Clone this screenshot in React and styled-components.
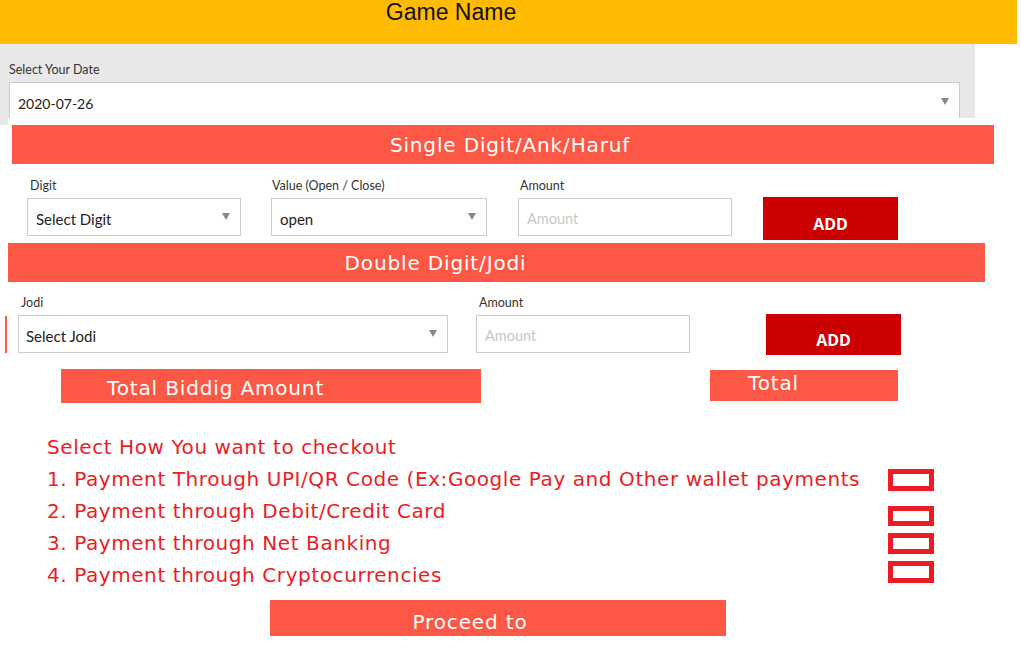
import React from 'react'
import styled, { createGlobalStyle } from 'styled-components'

const Global = createGlobalStyle`
body {
    margin: 0;
    background: #fff;
    font-family: 'Lato', 'Liberation Sans', sans-serif;
}
`

const Page = styled.div`
width: 1021px;
height: 655px;
overflow: hidden;
`

const Header = styled.header`
height: 44px;
width: 1017px;
background: #ffbb00;
padding-right: 115px;
box-sizing: border-box;
text-align: center;
font-family: 'Liberation Sans', Arial, sans-serif;
font-size: 23px;
line-height: 24px;
color: #111;
`

const DateSection = styled.section`
width: 975px;
height: 81px;
box-sizing: border-box;
background: #e8e8e8;
padding: 18px 15px 0 9px;
`

const Label = styled.div`
font-size: 12.5px;
line-height: 15px;
color: #333;
padding-left: ${props => props.inset || 0}px;
margin-bottom: 5px;
`

const Select = styled.div`
height: ${props => props.h || 38}px;
box-sizing: border-box;
background: #fff;
border: 1px solid #ccc;
display: flex;
align-items: center;
justify-content: space-between;
padding: 3px 10px 0 ${props => props.pl || 8}px;
font-size: ${props => props.fs || 15}px;
color: #222;
`

const Caret = styled.span`
width: 0;
height: 0;
border-left: 4px solid transparent;
border-right: 4px solid transparent;
border-top: 7px solid #888;
margin-top: -5px;
`

const Input = styled(Select)`
color: #c8c8c8;
font-size: 14.5px;
`

const SinglePanel = styled.section`
margin: -7px 0 0 8px;
width: 992px;
height: 125px;
box-sizing: border-box;
background: #fff;
padding: 7px 6px 0 4px;
`

const Bar = styled.div`
height: 39px;
width: ${props => props.w}px;
box-sizing: border-box;
background: #fd5845;
color: #fff;
display: flex;
align-items: center;
justify-content: center;
padding-left: ${props => props.lead || 0}px;
padding-right: ${props => props.shift || 0}px;
font-family: 'DejaVu Sans', 'Liberation Sans', sans-serif;
font-size: 20px;
letter-spacing: 0.85px;
`

const FormRow = styled.div`
display: flex;
align-items: flex-start;
padding: ${props => props.top}px 0 0 ${props => props.left}px;
`

const Field = styled.div`
width: ${props => props.w}px;
margin-right: ${props => props.gap}px;
`

const AddButton = styled.button`
width: 135px;
height: ${props => props.h}px;
margin-top: ${props => props.top}px;
border: none;
background: #cc0000;
color: #fff;
font-family: 'Open Sans', 'Liberation Sans', sans-serif;
font-weight: 700;
font-size: 16px;
padding: ${props => props.pt}px 0 0;
display: flex;
justify-content: center;
align-items: center;
`

const DoubleBar = styled(Bar)`
margin-left: 8px;
`

const Stub = styled.div`
width: 2px;
height: 37px;
margin-top: 21px;
margin-right: 11px;
background: #fd5845;
`

const TotalsRow = styled.div`
display: flex;
align-items: flex-start;
margin-top: 14px;
padding-left: 61px;
`

const TotalBar = styled.div`
width: ${props => props.w}px;
height: ${props => props.h}px;
margin-top: ${props => props.top || 0}px;
margin-right: ${props => props.gap || 0}px;
box-sizing: border-box;
background: #fd5845;
color: #fff;
font-family: 'DejaVu Sans', 'Liberation Sans', sans-serif;
font-size: 20px;
letter-spacing: 0.85px;
line-height: 24px;
padding: ${props => props.pt}px 0 0 ${props => props.pl}px;
`

const Checkout = styled.section`
margin-top: 28px;
padding-left: 47px;
color: #ed1c24;
font-family: 'DejaVu Sans', 'Liberation Sans', sans-serif;
font-size: 20px;
letter-spacing: 0.58px;
line-height: 32px;
`

const Option = styled.div`
display: grid;
grid-template-columns: 841px 46px;
align-items: start;
white-space: nowrap;
`

const Check = styled.span`
display: block;
width: 46px;
height: ${props => props.h}px;
box-sizing: border-box;
border: 5px solid #ed1c24;
margin-top: ${props => props.top}px;
`

const Proceed = styled.button`
display: block;
width: 456px;
height: 36px;
margin: 9px 0 0 270px;
border: none;
background: #fd5845;
color: #fff;
font-family: 'DejaVu Sans', 'Liberation Sans', sans-serif;
font-size: 20px;
letter-spacing: 0.85px;
padding: 8px 56px 0 0;
`

const options = [
    { text: '1. Payment Through UPI/QR Code (Ex:Google Pay and Other wallet payments', h: 22, top: 6 },
    { text: '2. Payment through Debit/Credit Card', h: 20, top: 11 },
    { text: '3. Payment through Net Banking', h: 21, top: 6 },
    { text: '4. Payment through Cryptocurrencies', h: 22, top: 2 },
]

const App = () => {
    return (
        <Page>
            <Global />
            <Header>Game Name</Header>

            <DateSection>
                <Label>Select Your Date</Label>
                <Select h={40} pl={8} fs={14}>
                    2020-07-26
                    <Caret />
                </Select>
            </DateSection>

            <SinglePanel>
                <Bar w={982} lead={14}>Single Digit/Ank/Haruf</Bar>
                <FormRow top={14} left={15}>
                    <Field w={214} gap={30}>
                        <Label inset={3}>Digit</Label>
                        <Select>Select Digit<Caret /></Select>
                    </Field>
                    <Field w={216} gap={31}>
                        <Label inset={1}>Value (Open / Close)</Label>
                        <Select>open<Caret /></Select>
                    </Field>
                    <Field w={214} gap={31}>
                        <Label inset={2}>Amount</Label>
                        <Input>Amount</Input>
                    </Field>
                    <AddButton h={43} top={19} pt={10}>ADD</AddButton>
                </FormRow>
            </SinglePanel>

            <DoubleBar w={977} shift={122}>Double Digit/Jodi</DoubleBar>

            <FormRow top={13} left={5}>
                <Stub />
                <Field w={430} gap={28}>
                    <Label inset={3}>Jodi</Label>
                    <Select h={38} pl={7}>Select Jodi<Caret /></Select>
                </Field>
                <Field w={214} gap={76}>
                    <Label inset={3}>Amount</Label>
                    <Input>Amount</Input>
                </Field>
                <AddButton h={41} top={19} pt={10}>ADD</AddButton>
            </FormRow>

            <TotalsRow>
                <TotalBar w={420} h={34} gap={229} pt={7} pl={46}>Total Biddig Amount</TotalBar>
                <TotalBar w={188} h={31} top={1} pt={1} pl={38}>Total</TotalBar>
            </TotalsRow>

            <Checkout>
                <div>Select How You want to checkout</div>
                {options.map(o => (
                    <Option key={o.text}>
                        <span>{o.text}</span>
                        <Check h={o.h} top={o.top} />
                    </Option>
                ))}
            </Checkout>

            <Proceed>Proceed to</Proceed>
        </Page>
    )
}

export default App
